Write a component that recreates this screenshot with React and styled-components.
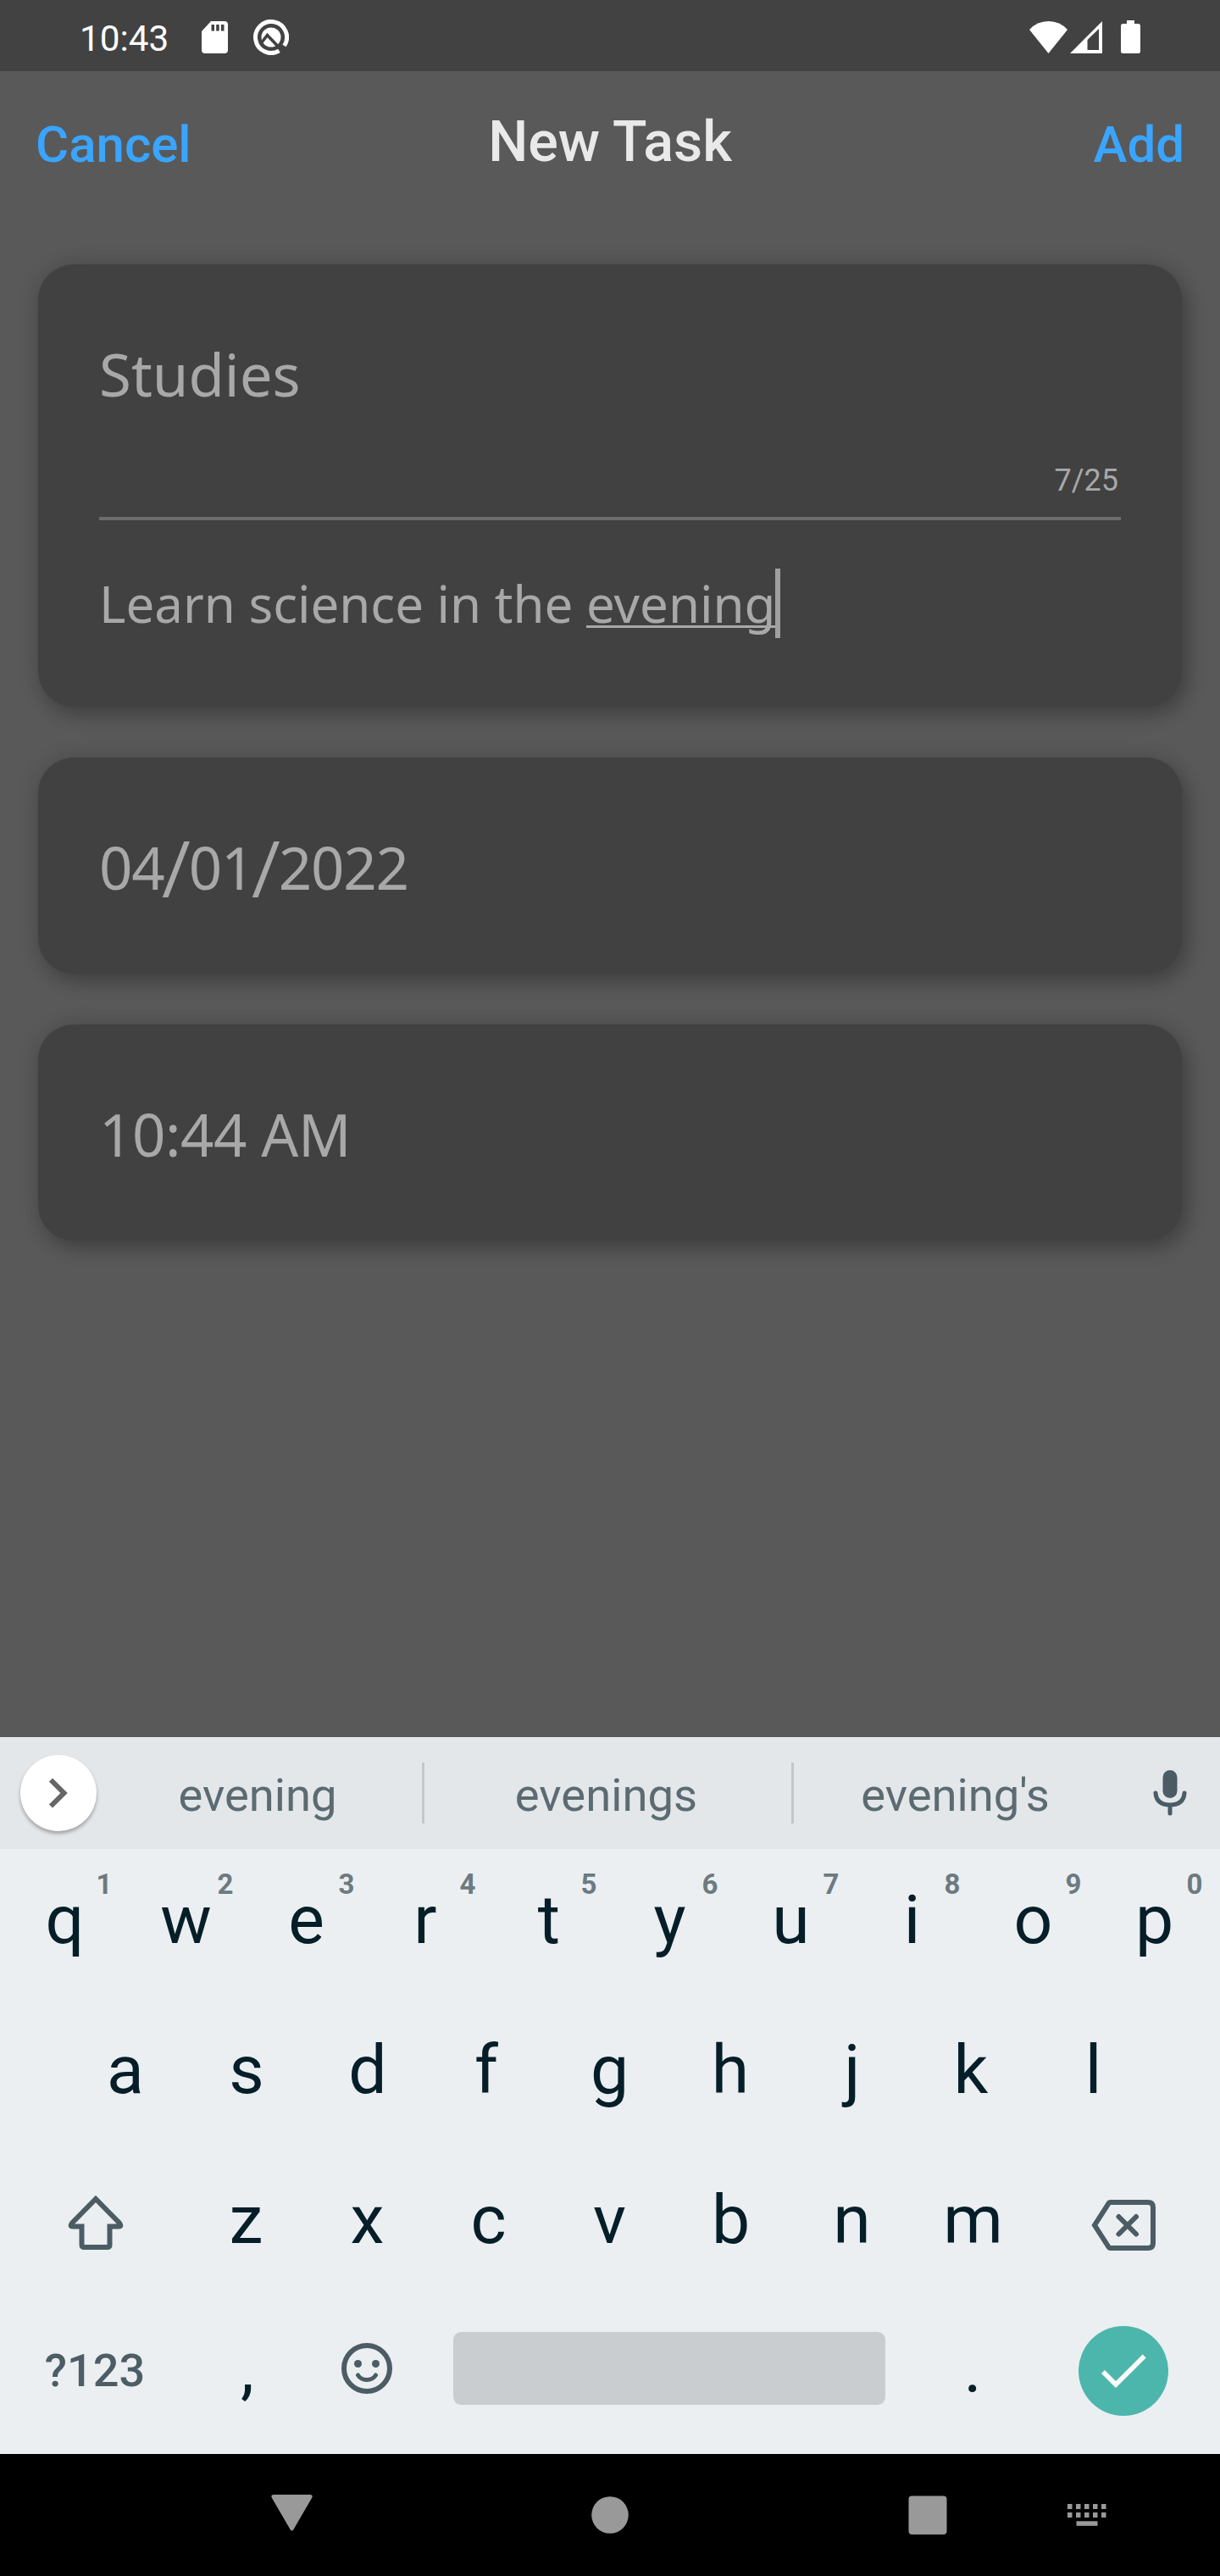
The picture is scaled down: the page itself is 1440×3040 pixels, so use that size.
import React from "react";
import styled, { createGlobalStyle } from "styled-components";

const GlobalStyle = createGlobalStyle`
  * { box-sizing: border-box; }
  html, body { margin: 0; padding: 0; background: #595959; }
  svg { display: block; flex: none; }
`;

const roboto = `Roboto, "Liberation Sans", sans-serif`;
const noto = `"Noto Sans", "Liberation Sans", sans-serif`;

const Screen = styled.div`
  width: 1440px;
  height: 3040px;
  display: flex;
  flex-direction: column;
  background: #595959;
  font-family: ${roboto};
  overflow: hidden;
`;

const StatusBar = styled.header`
  height: 84px;
  flex: none;
  display: flex;
  align-items: center;
  justify-content: space-between;
  background: #424242;
  padding: 3px 94px 0 94px;
  color: #fff;
`;

const StatusGroup = styled.div`
  display: flex;
  align-items: center;
  gap: ${(p) => p.$gap}px;
`;

const Clock = styled.span`
  font-size: 42.3px;
  line-height: 50px;
  width: 114px;
  margin-top: 4px;
`;

const TitleBar = styled.div`
  height: 228px;
  flex: none;
  display: grid;
  grid-template-columns: 1fr auto 1fr;
  align-items: start;
  padding: 0 42px;
`;

const Action = styled.button`
  border: 0;
  padding: 0;
  margin: 52px 0 0;
  background: none;
  font: 500 60px/70px ${roboto};
  color: #3aa5ff;
  justify-self: ${(p) => p.$side};
`;

const Title = styled.h1`
  margin: 43px 0 0;
  font: 500 66.4px/80px ${roboto};
  color: #e9e9e9;
`;

const Form = styled.main`
  flex: 1;
  display: flex;
  flex-direction: column;
  gap: 60px;
  padding: 0 45px;
`;

const Card = styled.section`
  height: ${(p) => p.$height}px;
  flex: none;
  border-radius: 42px;
  background: #414141;
  box-shadow: 7px 10px 21px rgba(0, 0, 0, 0.22), 0 0 26px rgba(0, 0, 0, 0.12);
  padding: 0 72px;
  color: #a8a8a8;
  font-family: ${noto};
`;

const FieldText = styled.div`
  font-size: 69px;
  line-height: 96px;
  padding-top: 81px;
  letter-spacing: ${(p) => p.$spacing || 0}px;
`;

const Slash = styled.span`
  font-family: ${roboto};
  font-size: 86px;
  line-height: 0;
  vertical-align: -4px;
  margin: 0 -2.5px;
`;

const Counter = styled.div`
  margin-top: 57px;
  font: 400 36px/42px ${roboto};
  text-align: right;
  padding-right: 3px;
`;

const Rule = styled.hr`
  margin: 22px 0 0;
  border: 0;
  height: 4px;
  background: #6c6c6c;
`;

const Note = styled.div`
  display: flex;
  align-items: flex-start;
  margin-top: 57px;
  font-size: 60px;
  line-height: 82px;
  white-space: pre;
`;

const Composing = styled.span`
  text-decoration: underline;
  text-decoration-thickness: 3px;
  text-underline-offset: 3px;
  text-decoration-skip-ink: none;
`;

const Caret = styled.span`
  width: 6px;
  height: 82px;
  background: #a0a0a0;
`;

const Keyboard = styled.section`
  height: 846px;
  flex: none;
  display: flex;
  flex-direction: column;
  background: #ebeff2;
`;

const Suggestions = styled.div`
  height: 132px;
  flex: none;
  display: grid;
  grid-template-columns: 90px 384px 3px 433px 3px 385px 1fr;
  align-items: center;
  padding-left: 24px;
  background: #e3e7ea;
  color: #5c6b72;
`;

const Expand = styled.div`
  width: 90px;
  height: 90px;
  border-radius: 50%;
  background: #fff;
  box-shadow: 0 3px 4px rgba(0, 0, 0, 0.3);
  display: grid;
  place-items: center;
`;

const Suggestion = styled.span`
  font-size: 54.4px;
  line-height: 64px;
  text-align: center;
  padding: 6px 4px 0 0;
`;

const Separator = styled.i`
  height: 72px;
  background: #c3c7ca;
`;

const KeyRow = styled.div`
  height: ${(p) => p.$height || 177}px;
  flex: none;
  display: flex;
  padding: 0 ${(p) => p.$inset}px;
`;

const Key = styled.div`
  position: relative;
  width: ${(p) => p.$width || 143}px;
  height: 100%;
  display: flex;
  justify-content: center;
  font-size: 80.5px;
  line-height: 94px;
  padding: 37px ${(p) => p.$trim ?? 2}px 0 0;
  color: #051e28;
`;

const PunctuationKey = styled(Key)`
  padding: 36px 0 0 3px;
`;

const Hint = styled.sup`
  position: absolute;
  top: 23px;
  left: 108.5px;
  font-size: 33px;
  font-weight: 700;
  line-height: 38px;
  color: #6d7a80;
`;

const ModeLabel = styled.span`
  font-size: 54px;
  font-weight: 500;
  line-height: 64px;
  margin: 16px 0 0 2px;
  color: #4c5d65;
`;

const IconKey = styled.div`
  width: ${(p) => p.$width}px;
  display: flex;
  justify-content: center;
  padding-top: ${(p) => p.$top}px;
`;

const SpaceBar = styled.div`
  width: 510px;
  height: 86px;
  margin: 39px 30px 0 31px;
  border-radius: 9px;
  background: #c9cdd0;
`;

const Enter = styled.div`
  width: 106px;
  height: 106px;
  border-radius: 50%;
  background: #4db6ac;
  display: grid;
  place-items: center;
`;

const NavBar = styled.footer`
  height: 144px;
  flex: none;
  display: grid;
  grid-template-columns: 319.500px 378.500px 374px 188px 1fr;
  background: #000;
  padding-top: 48px;
`;

const rows = ["qwertyuiop", "asdfghjkl", "zxcvbnm"];

// Right padding of a key, per letter, that centres its glyph optically.
const trims = { q: 0, w: 0, a: 0, s: 0, d: 0, g: 1, t: 1, r: 7, f: 6, k: 6, l: 3, j: 0 };

const SdIcon = () => (
  <svg width="31" height="38" viewBox="0 0 31 38">
    <path fill="#fff" fillRule="evenodd" d="M11 0H27Q31 0 31 4V34Q31 38 27 38H4Q0 38 0 34V12ZM11.5 4V11.500H15V4ZM17.200 4V11.500H20.700V4ZM23 4V11.500H26.500V4Z" />
  </svg>
);

const QIcon = () => (
  <svg width="42" height="42" viewBox="0 0 42 42" fill="none">
    <path d="M36.600 31A18.500 18.500 0 1 0 30.500 36.900" stroke="#fff" strokeWidth="5" />
    <circle cx="21" cy="21" r="11.5" fill="#fff" />
    <path d="M10 27L16.500 18.500L36 39" stroke="#424242" strokeWidth="3.6" />
  </svg>
);

const WifiIcon = () => (
  <svg width="45" height="38" viewBox="0 0 45 38">
    <path fill="#fff" d="M22.500 38L0 10Q9 0 22.500 0T45 10Z" />
  </svg>
);

const SignalIcon = () => (
  <svg width="38" height="38" viewBox="0 0 38 38">
    <path fill="#fff" fillRule="evenodd" d="M0 38L38 0V38ZM20.500 22V34H34V9Z" />
  </svg>
);

const BatteryIcon = () => (
  <svg width="23" height="39" viewBox="0 0 23 39">
    <path fill="#fff" d="M7 0H16V4H20.500Q23 4 23 6.500V36.500Q23 39 20.500 39H2.500Q0 39 0 36.500V6.500Q0 4 2.500 4H7Z" />
  </svg>
);

const ChevronIcon = () => (
  <svg width="24" height="36" viewBox="0 0 24 36">
    <path d="M3 2.500L18.500 18L3 33.500" fill="none" stroke="#666" strokeWidth="6" />
  </svg>
);

const MicIcon = () => (
  <svg width="40" height="54" viewBox="0 0 40 54">
    <rect x="11.500" y="0" width="17" height="33" rx="8.500" fill="#4b5c64" />
    <path d="M3 27Q4 41 20 41T37 27M20 41V51" fill="none" stroke="#4b5c64" strokeWidth="5" strokeLinecap="round" />
  </svg>
);

const ShiftIcon = () => (
  <svg width="68" height="66" viewBox="0 0 68 66">
    <path d="M34 5L62 33.500Q65 37.500 61 37.500H50.500V59Q50.500 62 47.500 62H20.500Q17.500 62 17.500 59V37.500H7Q3 37.500 6 33.500Z" fill="none" stroke="#4b5c64" strokeWidth="6" />
  </svg>
);

const BackspaceIcon = () => (
  <svg width="76" height="60" viewBox="0 0 76 60" fill="none" stroke="#4b5c64" strokeWidth="6">
    <path d="M22.500 3H67Q73 3 73 9V51Q73 57 67 57H22.500Q21 57 20 55L4 30L20 5Q21 3 22.500 3Z" />
    <path d="M32.500 20L53 40.500M53 20L32.500 40.500" strokeLinecap="round" />
  </svg>
);

const SmileIcon = () => (
  <svg width="60" height="60" viewBox="0 0 60 60">
    <circle cx="30" cy="30" r="27" fill="none" stroke="#4b5c64" strokeWidth="6" />
    <circle cx="19.500" cy="24.500" r="4.500" fill="#4b5c64" />
    <circle cx="40.500" cy="24.500" r="4.500" fill="#4b5c64" />
    <path d="M19.500 38Q23 43.500 30 43.500T40.500 38" fill="none" stroke="#4b5c64" strokeWidth="5" strokeLinecap="round" />
  </svg>
);

const CheckIcon = () => (
  <svg width="54" height="42" viewBox="0 0 54 42">
    <path d="M3 22L18 37L51.700 3.500" fill="none" stroke="#fff" strokeWidth="5.600" />
  </svg>
);

const BackNav = () => (
  <svg width="49" height="43" viewBox="0 0 49 43">
    <path fill="#999" d="M3 0H46Q50 0 48 4L26.500 41Q24.500 44 22.500 41L1 4Q-1 0 3 0Z" />
  </svg>
);

const HomeNav = () => (
  <svg width="44" height="46" viewBox="0 0 44 46">
    <circle cx="22" cy="24" r="21.800" fill="#999" />
  </svg>
);

const RecentNav = () => (
  <svg width="46" height="48" viewBox="0 0 46 48">
    <rect x="0.500" y="1.500" width="45" height="45.500" rx="4" fill="#999" />
  </svg>
);

const KeyboardNav = () => (
  <svg width="46" height="38" viewBox="0 0 46 38" fill="#999">
    {[0, 1, 2, 3, 4].map((i) => (
      <g key={i}>
        <rect x={i * 10} y="11" width="5.500" height="6" />
        <rect x={i * 10} y="21" width="5.500" height="6" />
      </g>
    ))}
    <rect x="10.500" y="31.300" width="25" height="5.500" />
  </svg>
);

const Letters = ({ text, hints }) =>
  [...text].map((c, i) => (
    <Key key={c} $trim={trims[c]}>
      {c}
      {hints && <Hint>{(i + 1) % 10}</Hint>}
    </Key>
  ));

export default function App() {
  return (
    <Screen>
      <GlobalStyle />
      <StatusBar>
        <StatusGroup $gap={30}>
          <Clock>10:43</Clock>
          <StatusGroup $gap={30}>
            <SdIcon />
            <QIcon />
          </StatusGroup>
        </StatusGroup>
        <StatusGroup $gap={3}>
          <WifiIcon />
          <StatusGroup $gap={22}>
            <SignalIcon />
            <BatteryIcon />
          </StatusGroup>
        </StatusGroup>
      </StatusBar>

      <TitleBar>
        <Action $side="start">Cancel</Action>
        <Title>New Task</Title>
        <Action $side="end">Add</Action>
      </TitleBar>

      <Form>
        <Card $height={522}>
          <FieldText>Studies</FieldText>
          <Counter>7/25</Counter>
          <Rule />
          <Note>
            Learn science in the <Composing>evening</Composing>
            <Caret />
          </Note>
        </Card>
        <Card $height={255}>
          <FieldText $spacing={-1.2}>04<Slash>/</Slash>01<Slash>/</Slash>2022</FieldText>
        </Card>
        <Card $height={255}>
          <FieldText $spacing={-0.5}>10:44 AM</FieldText>
        </Card>
      </Form>

      <Keyboard>
        <Suggestions>
          <Expand><ChevronIcon /></Expand>
          <Suggestion>evening</Suggestion>
          <Separator />
          <Suggestion>evenings</Suggestion>
          <Separator />
          <Suggestion>evening's</Suggestion>
          <IconKey $width={118} $top={0}><MicIcon /></IconKey>
        </Suggestions>
        <KeyRow $inset={5}><Letters text={rows[0]} hints /></KeyRow>
        <KeyRow $inset={76.5}><Letters text={rows[1]} /></KeyRow>
        <KeyRow $inset={5}>
          <IconKey $width={215} $top={54}><ShiftIcon /></IconKey>
          <Letters text={rows[2]} />
          <IconKey $width={210} $top={60}><BackspaceIcon /></IconKey>
        </KeyRow>
        <KeyRow $inset={5} $height={183}>
          <Key $width={214}><ModeLabel>?123</ModeLabel></Key>
          <PunctuationKey $width={143}>,</PunctuationKey>
          <IconKey $width={142} $top={52}><SmileIcon /></IconKey>
          <SpaceBar />
          <PunctuationKey $width={143}>.</PunctuationKey>
          <IconKey $width={215} $top={32}><Enter><CheckIcon /></Enter></IconKey>
        </KeyRow>
      </Keyboard>

      <NavBar>
        <span />
        <BackNav />
        <HomeNav />
        <RecentNav />
        <KeyboardNav />
      </NavBar>
    </Screen>
  );
}
